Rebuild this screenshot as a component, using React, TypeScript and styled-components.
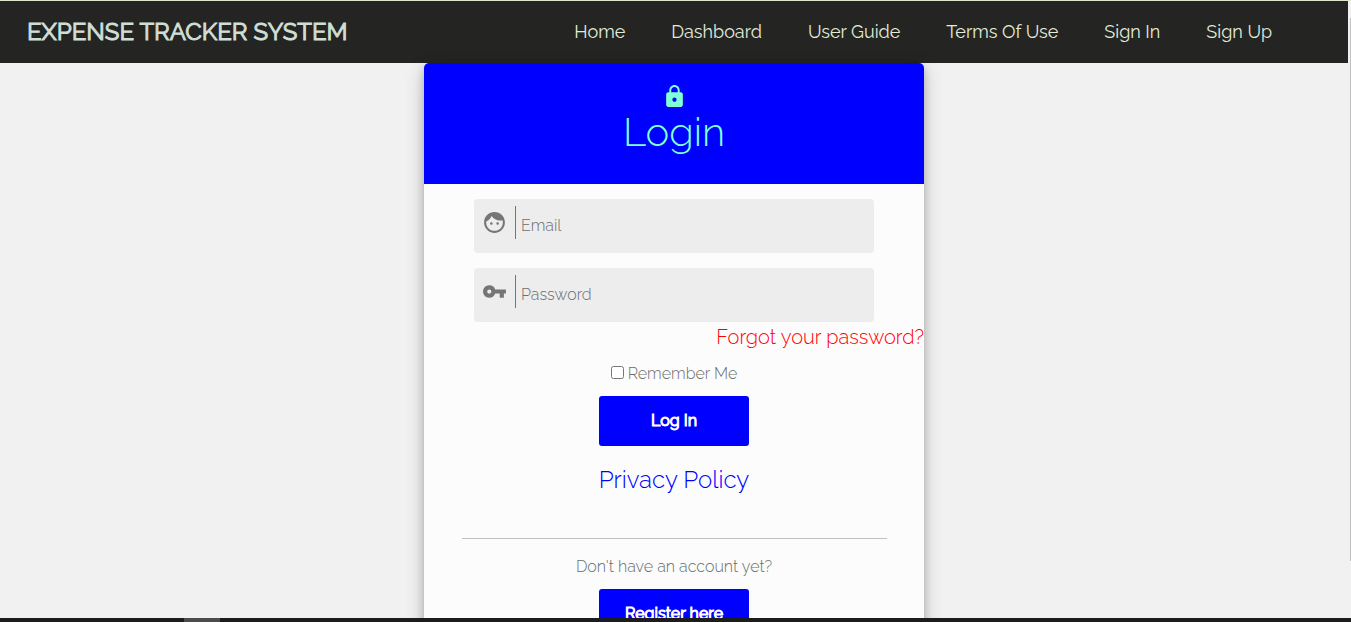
import React from 'react';
import styled, { createGlobalStyle } from 'styled-components';
import { MdFace, MdLock, MdVpnKey } from 'react-icons/md';

const GlobalStyle = createGlobalStyle`
  *, *::before, *::after { box-sizing: border-box; }
  body {
    margin: 0;
    background: #f1f1f1;
    color: #6c6c6c;
    font-family: Raleway, Lato, 'Liberation Sans', sans-serif;
    font-size: 16px;
    font-weight: 300;
    line-height: 24px;
  }
  a { text-decoration: none; }
  p, h1, h2 { margin: 0; }
`;

const Screen = styled.div`
  display: flex;
  flex-direction: column;
  height: 100vh;
  overflow: hidden;
  border-top: 1px solid #dde6cf;
`;

const Viewport = styled.div`
  display: flex;
  flex: 1;
  min-height: 0;
`;

const Page = styled.div`
  flex: 1;
  min-width: 0;
  overflow: hidden;
`;

const ScrollTrack = styled.div`
  width: 3px;
  padding: 17px 0 57px 2px;
  background: #f1f1f1;
`;

const ScrollThumb = styled.div`
  height: 100%;
  background: #c1c1c1;
`;

const Taskbar = styled.div`
  flex: none;
  height: 4px;
  padding-left: 184px;
  background: #1c1b1d;
`;

const ActiveTask = styled.div`
  width: 36px;
  height: 4px;
  background: #4c4c4c;
`;

const Header = styled.header`
  display: flex;
  align-items: center;
  justify-content: space-between;
  height: 62px;
  padding: 0 76px 0 27px;
  background: #242422;
`;

const Brand = styled.h1`
  color: #cfdfd6;
  font-size: 24px;
  font-weight: 400;
  line-height: 32px;
  -webkit-text-stroke: 1px #cfdfd6;
`;

const Nav = styled.nav`
  display: flex;
  gap: 46px;
`;

const NavLink = styled.a`
  color: #e2ecda;
  font-size: 18px;
  font-weight: 400;
`;

const Card = styled.main`
  display: flex;
  flex-direction: column;
  align-items: center;
  width: 500px;
  max-width: 100%;
  margin: 0 auto;
  padding-bottom: 40px;
  border-radius: 5px;
  background: #fcfcfc;
  box-shadow: 0 4px 8px rgba(0, 0, 0, 0.2), 0 6px 20px rgba(0, 0, 0, 0.19);
`;

const CardHeader = styled.div`
  display: flex;
  flex-direction: column;
  align-items: center;
  width: 100%;
  height: 121px;
  padding-top: 21px;
  border-radius: 5px 5px 0 0;
  background: #0000ff;
  color: #7fffd4;
`;

const Title = styled.h2`
  font-size: 40px;
  font-weight: 300;
  line-height: 46px;
`;

const Form = styled.form`
  display: flex;
  flex-direction: column;
  align-items: center;
  width: 100%;
`;

const Field = styled.label`
  display: flex;
  width: 80%;
  height: 54px;
  margin-top: 15px;
  padding: 7px 8px;
  border-radius: 4px;
  background: #ededed;
`;

const FieldIcon = styled.span`
  display: flex;
  width: 34px;
  height: 33px;
  padding-top: 4px;
  border-right: 1px solid #757575;
  color: #757575;
`;

const Input = styled.input`
  flex: 1;
  min-width: 0;
  padding: 0 5px;
  border: 0;
  outline: 0;
  background: transparent;
  color: #6c6c6c;
  font: inherit;
  &::placeholder { color: #6c6c6c; }
`;

const ForgotLink = styled.a`
  align-self: flex-end;
  margin-top: 3px;
  color: #ff0000;
  font-size: 20px;
`;

const Remember = styled.label`
  margin: 13px 0 10px;
`;

const Checkbox = styled.input`
  width: 13px;
  height: 13px;
  margin: 0 4px 0 0;
`;

const Button = styled.button`
  width: 150px;
  height: 50px;
  padding: 0 0 2px;
  border: 0;
  border-radius: 3px;
  background: #0000ff;
  color: #ffffff;
  font-family: inherit;
  font-size: 16px;
  font-weight: 400;
  -webkit-text-stroke: 1px #ffffff;
`;

const PolicyLink = styled.a`
  margin-top: 18px;
  color: #0000ff;
  font-size: 24px;
  line-height: 32px;
`;

const Divider = styled.hr`
  width: 85%;
  height: 1px;
  margin: 42px 0 16px;
  border: 0;
  background: #c1c1c1;
`;

const Prompt = styled.p`
  margin-bottom: 10px;
  color: #627070;
`;

const links = ['Home', 'Dashboard', 'User Guide', 'Terms Of Use', 'Sign In', 'Sign Up'];

export default function App() {
  return (
    <>
      <GlobalStyle />
      <Screen>
        <Viewport>
          <Page>
            <Header>
              <Brand>EXPENSE TRACKER SYSTEM</Brand>
              <Nav>
                {links.map((label) => (
                  <NavLink key={label} href="#">{label}</NavLink>
                ))}
              </Nav>
            </Header>
            <Card>
              <CardHeader>
                <MdLock size={25} />
                <Title>Login</Title>
              </CardHeader>
              <Form onSubmit={(e) => e.preventDefault()}>
                <Field>
                  <FieldIcon><MdFace size={25} /></FieldIcon>
                  <Input type="email" placeholder="Email" aria-label="Email" />
                </Field>
                <Field>
                  <FieldIcon><MdVpnKey size={25} /></FieldIcon>
                  <Input type="password" placeholder="Password" aria-label="Password" />
                </Field>
                <ForgotLink href="#">Forgot your password?</ForgotLink>
                <Remember>
                  <Checkbox type="checkbox" />
                  Remember Me
                </Remember>
                <Button type="submit">Log In</Button>
              </Form>
              <PolicyLink href="#">Privacy Policy</PolicyLink>
              <Divider />
              <Prompt>Don't have an account yet?</Prompt>
              <Button type="button">Register here</Button>
            </Card>
          </Page>
          <ScrollTrack><ScrollThumb /></ScrollTrack>
        </Viewport>
        <Taskbar><ActiveTask /></Taskbar>
      </Screen>
    </>
  );
}
